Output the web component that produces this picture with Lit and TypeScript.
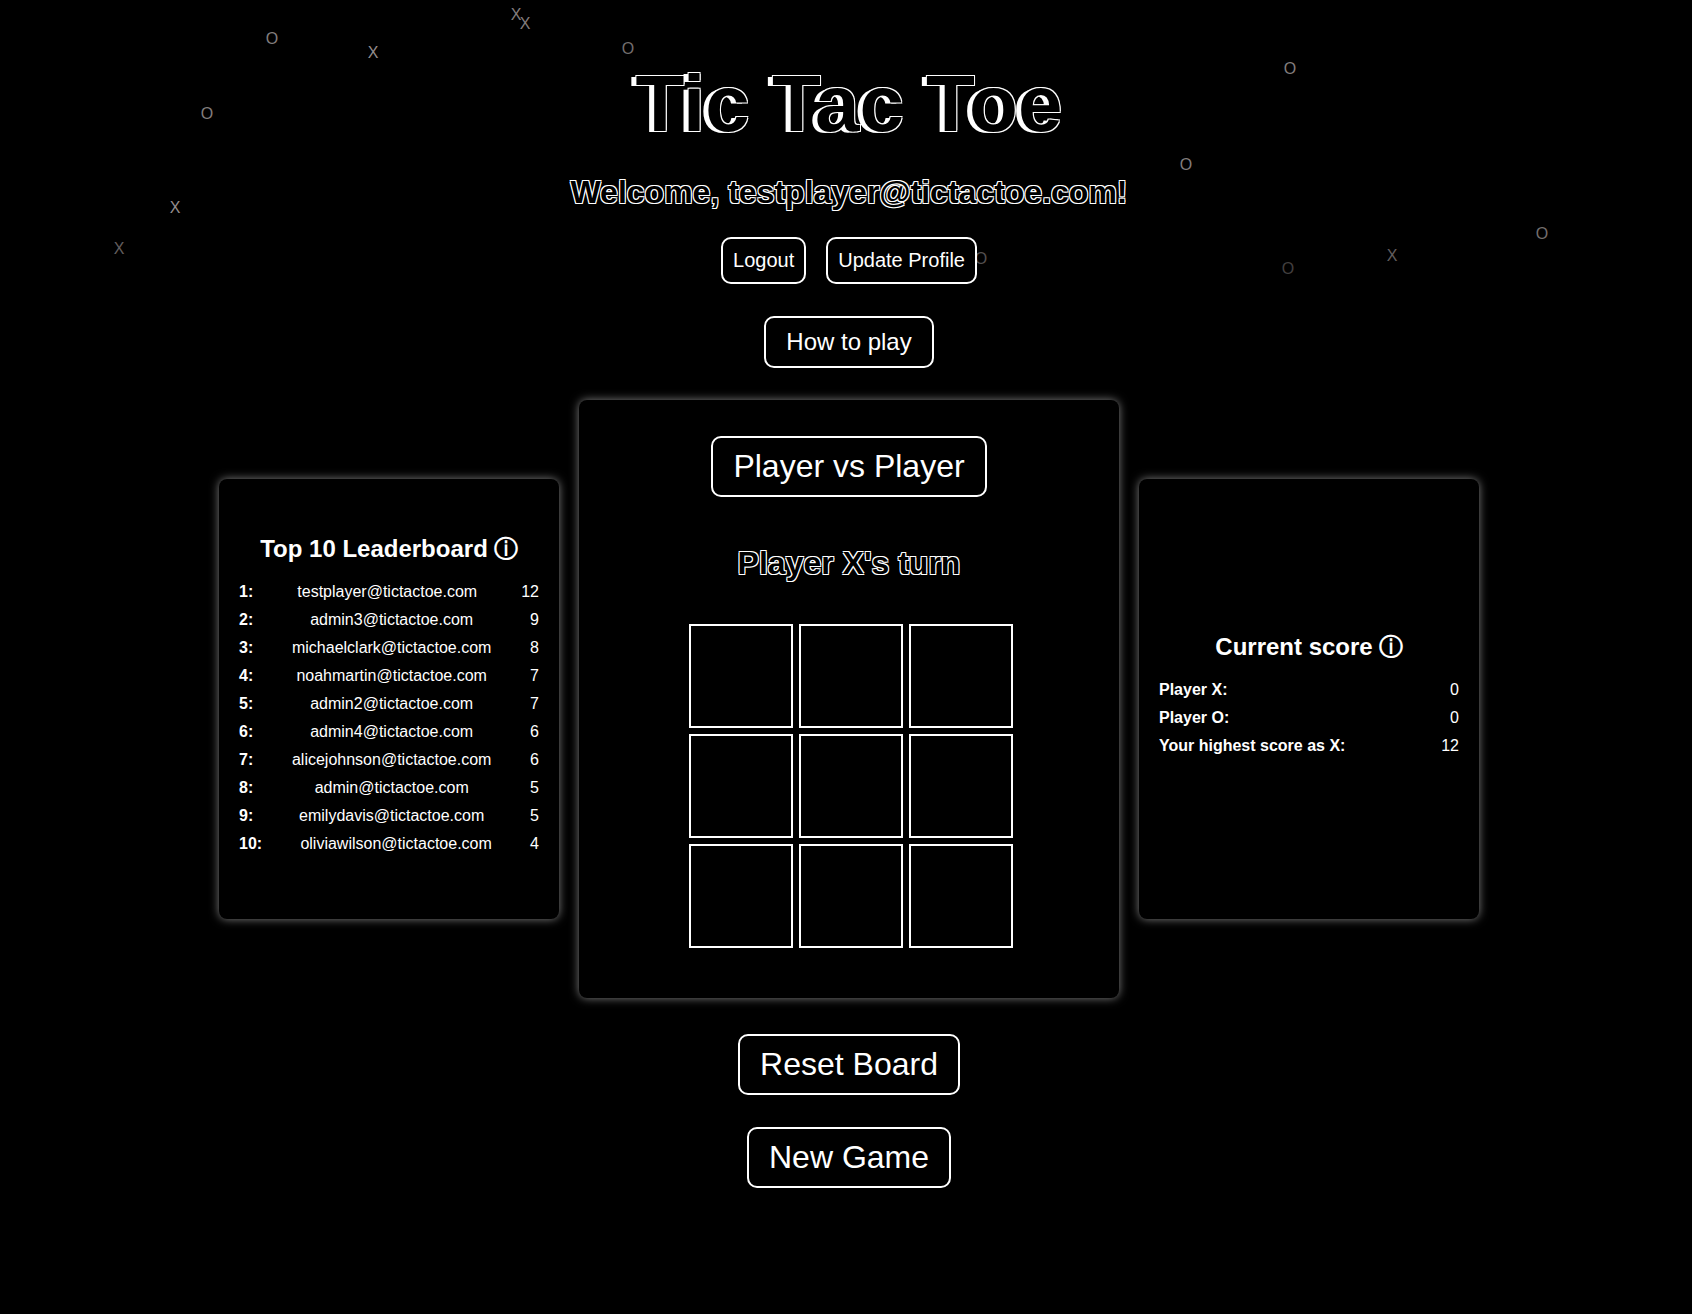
import { LitElement, html, css } from "lit";
import { customElement, property, state } from "lit/decorators.js";

interface Mark {
  char: string;
  x: number;
  y: number;
  opacity: number;
}

const MARKS: Mark[] = [
  { char: "O", x: 272, y: 39, opacity: 0.8 },
  { char: "X", x: 373, y: 53, opacity: 0.9 },
  { char: "X", x: 516, y: 15, opacity: 0.8 },
  { char: "X", x: 525, y: 24, opacity: 0.8 },
  { char: "O", x: 628, y: 49, opacity: 0.7 },
  { char: "O", x: 207, y: 114, opacity: 0.8 },
  { char: "X", x: 175, y: 208, opacity: 0.9 },
  { char: "X", x: 119, y: 249, opacity: 0.6 },
  { char: "O", x: 1290, y: 69, opacity: 0.8 },
  { char: "O", x: 1186, y: 165, opacity: 0.8 },
  { char: "O", x: 981, y: 259, opacity: 0.5 },
  { char: "O", x: 1288, y: 269, opacity: 0.4 },
  { char: "X", x: 1392, y: 256, opacity: 0.6 },
  { char: "O", x: 1542, y: 234, opacity: 0.7 },
];

const LEADERS: [string, number][] = [
  ["testplayer@tictactoe.com", 12],
  ["admin3@tictactoe.com", 9],
  ["michaelclark@tictactoe.com", 8],
  ["noahmartin@tictactoe.com", 7],
  ["admin2@tictactoe.com", 7],
  ["admin4@tictactoe.com", 6],
  ["alicejohnson@tictactoe.com", 6],
  ["admin@tictactoe.com", 5],
  ["emilydavis@tictactoe.com", 5],
  ["oliviawilson@tictactoe.com", 4],
];

@customElement("floating-marks")
export class FloatingMarks extends LitElement {
  static styles = css`
    :host {
      position: absolute;
      inset: 0;
      overflow: hidden;
      pointer-events: none;
    }
    .mark {
      position: absolute;
      transform: translate(-50%, -50%);
      color: #a39c9c;
      font-size: 16px;
      line-height: 18px;
    }
  `;

  render() {
    return MARKS.map(
      (m) => html`<span
        class="mark"
        aria-hidden="true"
        style="left:${m.x}px;top:${m.y}px;opacity:${m.opacity}"
        >${m.char}</span
      >`
    );
  }
}

/** Side panel: a heading with an info button above rows of figures. */
@customElement("score-panel")
export class ScorePanel extends LitElement {
  @property() heading = "";
  @property({ attribute: false }) rows: (string | number)[][] = [];

  static styles = css`
    :host {
      box-sizing: border-box;
      flex: 0 1 340px;
      min-height: 440px;
      padding: 20px;
      display: flex;
      flex-direction: column;
      align-items: center;
      justify-content: center;
      gap: 20px;
      background: #000;
      border-radius: 8px;
      box-shadow: 0 0 10px rgba(255, 255, 255, 0.5);
    }
    .title {
      margin: 0;
      display: flex;
      gap: 6px;
      font-size: 24px;
      line-height: 28px;
      font-weight: bold;
    }
    .info {
      padding: 0;
      border: 0;
      background: none;
      color: inherit;
      font: inherit;
      cursor: pointer;
    }
    .rows,
    .rows tbody {
      display: block;
      width: 100%;
    }
    .row {
      display: flex;
      justify-content: space-between;
      margin-bottom: 10px;
      font-size: 16px;
      line-height: 18px;
    }
    .row th,
    .row td {
      padding: 0;
    }
  `;

  render() {
    return html`
      <h3 class="title">
        ${this.heading}
        <button class="info" type="button">ⓘ</button>
      </h3>
      <table class="rows">
        <tbody>
          ${this.rows.map(
            ([label, ...values]) => html`<tr class="row">
              <th scope="row">${label}</th>
              ${values.map((v) => html`<td>${v}</td>`)}
            </tr>`
          )}
        </tbody>
      </table>
    `;
  }
}

@customElement("app-root")
export class AppRoot extends LitElement {
  @state() private cells: string[] = Array(9).fill("");
  @state() private turn = "X";
  @state() private scoreX = 0;
  @state() private scoreO = 0;

  static styles = css`
    :host {
      display: block;
      position: relative;
      box-sizing: border-box;
      min-height: 100vh;
      padding: 58px 0 126px 6px;
      background: #000;
      color: #fff;
      font-family: "Liberation Sans", Arial, sans-serif;
    }
    .page {
      position: relative;
      display: flex;
      flex-direction: column;
      align-items: center;
    }
    .logo {
      margin: 0 0 24px;
      font-size: 80px;
      line-height: 92px;
      color: #000;
      text-shadow: -1px -1px 0 #fff, 1px -1px 0 #fff, -5px 1px 0 #fff,
        1px 1px 0 #fff;
    }
    .outline {
      margin: 0;
      font-size: 32px;
      line-height: 36px;
      color: #000;
      text-shadow: -1px -1px 0 #fff, 1px -1px 0 #fff, -1px 1px 0 #fff,
        1px 1px 0 #fff;
    }
    .account {
      display: flex;
      gap: 20px;
      margin: 27px 0 32px;
    }
    .btn {
      padding: 10px 20px;
      border: 2px solid #fff;
      border-radius: 10px;
      background: #000;
      color: #fff;
      font-family: inherit;
      font-size: 32px;
      line-height: 37px;
      cursor: pointer;
    }
    .btn.small {
      padding: 10px;
      font-size: 20px;
      line-height: 23px;
    }
    .btn.medium {
      font-size: 24px;
      line-height: 28px;
    }
    .game {
      align-self: stretch;
      display: flex;
      justify-content: center;
      align-items: center;
      gap: 20px;
      margin: 32px 0 36px;
    }
    .arena {
      box-sizing: border-box;
      flex: 0 1 540px;
      padding: 36px 20px 54px;
      display: flex;
      flex-direction: column;
      align-items: center;
      background: #000;
      border-radius: 8px;
      box-shadow: 0 0 10px rgba(255, 255, 255, 0.5);
    }
    .arena .outline {
      margin: 48px 0 43px;
    }
    .board {
      display: grid;
      grid-template-columns: repeat(3, 100px);
      grid-template-rows: repeat(3, 100px);
      gap: 10px;
    }
    .cell {
      box-sizing: content-box;
      width: 100px;
      height: 100px;
      padding: 0;
      border: 2px solid #fff;
      background: #000;
      color: #fff;
      font-family: inherit;
      font-size: 64px;
      line-height: 100px;
      cursor: pointer;
    }
    .actions {
      display: flex;
      flex-direction: column;
      align-items: center;
      gap: 32px;
    }
  `;

  private play(i: number) {
    if (this.cells[i]) return;
    this.cells = this.cells.map((c, n) => (n === i ? this.turn : c));
    this.turn = this.turn === "X" ? "O" : "X";
  }

  private reset() {
    this.cells = Array(9).fill("");
    this.turn = "X";
  }

  private newGame() {
    this.reset();
    this.scoreX = 0;
    this.scoreO = 0;
  }

  render() {
    return html`
      <floating-marks></floating-marks>
      <main class="page">
        <h1 class="logo">Tic Tac Toe</h1>
        <h2 class="outline">Welcome, testplayer@tictactoe.com!</h2>
        <div class="account">
          <button class="btn small" type="button">Logout</button>
          <button class="btn small" type="button">Update Profile</button>
        </div>
        <button class="btn medium" type="button">How to play</button>
        <div class="game">
          <score-panel
            heading="Top 10 Leaderboard"
            .rows=${LEADERS.map(([name, wins], i) => [`${i + 1}:`, name, wins])}
          ></score-panel>
          <section class="arena">
            <button class="btn" type="button">Player vs Player</button>
            <h2 class="outline">Player ${this.turn}'s turn</h2>
            <div class="board">
              ${this.cells.map(
                (c, i) => html`<button
                  class="cell"
                  type="button"
                  aria-label="Cell ${i + 1}"
                  @click=${() => this.play(i)}
                >${c}</button>`
              )}
            </div>
          </section>
          <score-panel
            heading="Current score"
            .rows=${[
              ["Player X:", this.scoreX],
              ["Player O:", this.scoreO],
              ["Your highest score as X:", 12],
            ]}
          ></score-panel>
        </div>
        <div class="actions">
          <button class="btn" type="button" @click=${this.reset}>Reset Board</button>
          <button class="btn" type="button" @click=${this.newGame}>New Game</button>
        </div>
      </main>
    `;
  }
}
